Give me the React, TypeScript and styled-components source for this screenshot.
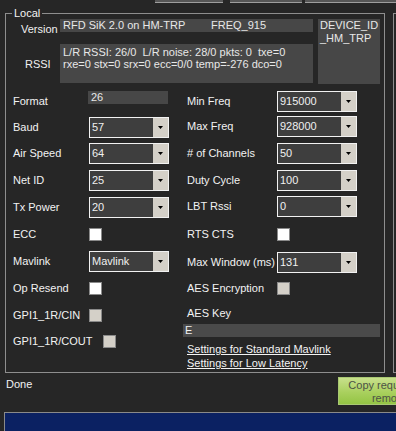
import React from "react";
import styled, { createGlobalStyle } from "styled-components";

const GlobalStyle = createGlobalStyle`
  html, body { margin: 0; padding: 0; background: #262626; overflow: hidden; }
  body {
    font-family: "Liberation Sans", Arial, sans-serif;
    font-size: 11px;
    color: #f0f0f0;
  }
`;

const Page = styled.div`
  width: 396px;
  height: 431px;
  overflow: hidden;
  display: flex;
  flex-direction: column;
  background: #262626;
`;

const TopStrip = styled.div`
  display: flex;
  height: 3px;
  padding-left: 155px;
  flex-shrink: 0;
`;

const StripBar = styled.div<{ $w: number; $ml?: number }>`
  width: ${(p) => p.$w}px;
  margin-left: ${(p) => p.$ml ?? 0}px;
  box-sizing: border-box;
  background: #565656;
  border-bottom: 1px solid #9e9e9e;
  flex-shrink: 0;
`;

const MainRow = styled.div`
  display: flex;
  gap: 8px;
  margin-top: 10px;
  padding-left: 5px;
  flex-shrink: 0;
`;

const GroupBox = styled.div`
  position: relative;
  box-sizing: border-box;
  width: 380px;
  height: 360px;
  border: 1px solid #8e8e8e;
  flex-shrink: 0;
`;

const Legend = styled.span`
  position: absolute;
  top: -7px;
  left: 6px;
  padding: 0 2px;
  line-height: 13px;
  background: #262626;
  color: #f4f4f4;
`;

const SideBox = styled.div`
  box-sizing: border-box;
  width: 20px;
  height: 360px;
  border: 1px solid #8e8e8e;
  border-right: none;
  flex-shrink: 0;
`;

const TopSection = styled.div`
  display: grid;
  grid-template-columns: 54px 253px 5px 62px;
  grid-template-rows: 13px 12px 40px;
  margin-top: 5px;
`;

const SideLabel = styled.div<{ $pl: number; $pt?: number }>`
  padding-left: ${(p) => p.$pl}px;
  padding-top: ${(p) => p.$pt ?? 0}px;
  line-height: 13px;
  white-space: nowrap;
  align-self: ${(p) => (p.$pt ? "start" : "center")};
`;

const InfoBox = styled.div<{ $h: number }>`
  background: #474747;
  height: ${(p) => p.$h}px;
  box-sizing: border-box;
  padding: 0 0 0 3px;
  line-height: 13px;
  color: #e8e8e8;
  white-space: pre;
  overflow: hidden;
`;

const RssiBox = styled(InfoBox)`
  padding-top: 2px;
  line-height: 12px;
  align-self: start;
`;

const DeviceBox = styled(InfoBox)`
  grid-column: 4;
  grid-row: 1 / span 3;
  padding-left: 2px;
  line-height: 13px;
  white-space: normal;
  word-break: break-all;
`;

const VersionPart = styled.span<{ $w: number }>`
  display: inline-block;
  width: ${(p) => p.$w}px;
`;

const FormSection = styled.div`
  display: flex;
  margin-top: 4px;
`;

const Column = styled.div<{ $w: number; $pl: number }>`
  display: flex;
  flex-direction: column;
  width: ${(p) => p.$w}px;
  padding-left: ${(p) => p.$pl}px;
  box-sizing: border-box;
  flex-shrink: 0;
`;

const FormRow = styled.div<{ $h: number; $indent?: number }>`
  display: flex;
  align-items: center;
  height: ${(p) => p.$h}px;
  padding-left: ${(p) => p.$indent ?? 0}px;
`;

const FieldLabel = styled.span<{ $w: number }>`
  width: ${(p) => p.$w}px;
  flex-shrink: 0;
  white-space: nowrap;
  line-height: 13px;
  color: #f2f2f2;
`;

const ValueBox = styled.div<{ $lift?: number }>`
  width: 80px;
  height: 13px;
  line-height: 13px;
  margin-left: -1px;
  margin-bottom: ${(p) => p.$lift ?? 0}px;
  padding-left: 3px;
  box-sizing: border-box;
  background: #474747;
  color: #e8e8e8;
`;

const ComboFrame = styled.div`
  display: flex;
  width: 80px;
  height: 21px;
  box-sizing: border-box;
  border: 1px solid #f2f2f2;
  background: #3e3e3e;
  flex-shrink: 0;
`;

const ComboValue = styled.span`
  flex: 1;
  padding-left: 2px;
  line-height: 19px;
  color: #f0f0f0;
  white-space: nowrap;
  overflow: hidden;
`;

const ComboButton = styled.span`
  width: 15px;
  background: #d4d0c8;
  display: flex;
  align-items: center;
  justify-content: center;
`;

const CheckBox = styled.span<{ $disabled?: boolean }>`
  display: block;
  width: 13px;
  height: 13px;
  box-sizing: border-box;
  border: 1px solid #8a8a8a;
  background: ${(p) => (p.$disabled ? "#d4d0c8" : "#ffffff")};
  flex-shrink: 0;
`;

const KeyBox = styled.div`
  width: 197px;
  height: 13px;
  line-height: 13px;
  padding-left: 2px;
  box-sizing: border-box;
  background: #4a4a4a;
  color: #f0f0f0;
`;

const Links = styled.div`
  display: flex;
  flex-direction: column;
  margin-top: 5px;
  padding-left: 4px;
`;

const LinkText = styled.a`
  color: #f4f4f4;
  text-decoration: underline;
  line-height: 14px;
  white-space: nowrap;
  cursor: pointer;
`;

const BottomRow = styled.div`
  display: flex;
  align-items: flex-start;
  height: 39px;
  padding-left: 6px;
  flex-shrink: 0;
`;

const Status = styled.div`
  width: 332px;
  margin-top: 5px;
  line-height: 13px;
  color: #f2f2f2;
  flex-shrink: 0;
`;

const CopyButton = styled.div`
  width: 102px;
  height: 28px;
  margin-top: 4px;
  box-sizing: border-box;
  border: 1px solid #a9c873;
  background: linear-gradient(to bottom, #c8e08c 0%, #a9d05e 55%, #94c444 100%);
  color: #4d5246;
  text-align: center;
  line-height: 13px;
  padding-top: 1px;
  flex-shrink: 0;
`;

const BluePanel = styled.div`
  flex: 1;
  margin-left: 4px;
  border-top: 1px solid #8a8a8a;
  border-left: 1px solid #8a8a8a;
  background: #0b2162;
`;

const Arrow = () => (
  <svg width="5" height="3" viewBox="0 0 5 3">
    <polygon points="0,0 5,0 2.5,3" fill="#000" />
  </svg>
);

const Combo = ({ value }: { value: string }) => (
  <ComboFrame>
    <ComboValue>{value}</ComboValue>
    <ComboButton>
      <Arrow />
    </ComboButton>
  </ComboFrame>
);

export default function App() {
  return (
    <>
      <GlobalStyle />
      <Page>
        <TopStrip>
          <StripBar $w={68} />
          <StripBar $w={72} $ml={7} />
          <StripBar $w={100} $ml={3} />
        </TopStrip>
        <MainRow>
          <GroupBox>
            <Legend>Local</Legend>
            <TopSection>
              <SideLabel $pl={15} $pt={4}>Version</SideLabel>
              <InfoBox $h={13}>
                <VersionPart $w={148}>RFD SiK 2.0 on HM-TRP</VersionPart>
                FREQ_915
              </InfoBox>
              <DeviceBox $h={65}>DEVICE_ID _HM_TRP</DeviceBox>
              <SideLabel $pl={19} style={{ gridRow: 3, gridColumn: 1 }}>
                RSSI
              </SideLabel>
              <RssiBox $h={39} style={{ gridRow: 3, gridColumn: 2 }}>
                {"L/R RSSI: 26/0  L/R noise: 28/0 pkts: 0  txe=0\nrxe=0 stx=0 srx=0 ecc=0/0 temp=-276 dco=0"}
              </RssiBox>
            </TopSection>
            <FormSection>
              <Column $w={177} $pl={7}>
                <FormRow $h={26}>
                  <FieldLabel $w={76}>Format</FieldLabel>
                  <ValueBox $lift={7}>26</ValueBox>
                </FormRow>
                <FormRow $h={26}>
                  <FieldLabel $w={76}>Baud</FieldLabel>
                  <Combo value="57" />
                </FormRow>
                <FormRow $h={27}>
                  <FieldLabel $w={76}>Air Speed</FieldLabel>
                  <Combo value="64" />
                </FormRow>
                <FormRow $h={27}>
                  <FieldLabel $w={76}>Net ID</FieldLabel>
                  <Combo value="25" />
                </FormRow>
                <FormRow $h={27}>
                  <FieldLabel $w={76}>Tx Power</FieldLabel>
                  <Combo value="20" />
                </FormRow>
                <FormRow $h={27}>
                  <FieldLabel $w={76}>ECC</FieldLabel>
                  <CheckBox />
                </FormRow>
                <FormRow $h={27}>
                  <FieldLabel $w={76}>Mavlink</FieldLabel>
                  <Combo value="Mavlink" />
                </FormRow>
                <FormRow $h={27}>
                  <FieldLabel $w={76}>Op Resend</FieldLabel>
                  <CheckBox />
                </FormRow>
                <FormRow $h={26}>
                  <FieldLabel $w={76}>GPI1_1R/CIN</FieldLabel>
                  <CheckBox $disabled />
                </FormRow>
                <FormRow $h={26}>
                  <FieldLabel $w={90}>GPI1_1R/COUT</FieldLabel>
                  <CheckBox $disabled />
                </FormRow>
              </Column>
              <Column $w={197} $pl={0}>
                <FormRow $h={26} $indent={4}>
                  <FieldLabel $w={90}>Min Freq</FieldLabel>
                  <Combo value="915000" />
                </FormRow>
                <FormRow $h={25} $indent={4}>
                  <FieldLabel $w={90}>Max Freq</FieldLabel>
                  <Combo value="928000" />
                </FormRow>
                <FormRow $h={28} $indent={4}>
                  <FieldLabel $w={90}># of Channels</FieldLabel>
                  <Combo value="50" />
                </FormRow>
                <FormRow $h={26} $indent={4}>
                  <FieldLabel $w={90}>Duty Cycle</FieldLabel>
                  <Combo value="100" />
                </FormRow>
                <FormRow $h={26} $indent={4}>
                  <FieldLabel $w={90}>LBT Rssi</FieldLabel>
                  <Combo value="0" />
                </FormRow>
                <FormRow $h={31} $indent={4}>
                  <FieldLabel $w={90}>RTS CTS</FieldLabel>
                  <CheckBox />
                </FormRow>
                <FormRow $h={24} $indent={4}>
                  <FieldLabel $w={90}>Max Window (ms)</FieldLabel>
                  <Combo value="131" />
                </FormRow>
                <FormRow $h={29} $indent={4}>
                  <FieldLabel $w={90}>AES Encryption</FieldLabel>
                  <CheckBox $disabled />
                </FormRow>
                <FormRow $h={21} $indent={4}>
                  <FieldLabel $w={90}>AES Key</FieldLabel>
                </FormRow>
                <KeyBox>E</KeyBox>
                <Links>
                  <LinkText>Settings for Standard Mavlink</LinkText>
                  <LinkText>Settings for Low Latency</LinkText>
                </Links>
              </Column>
            </FormSection>
          </GroupBox>
          <SideBox />
        </MainRow>
        <BottomRow>
          <Status>Done</Status>
          <CopyButton>
            Copy required to
            <br />
            remote
          </CopyButton>
        </BottomRow>
        <BluePanel />
      </Page>
    </>
  );
}
